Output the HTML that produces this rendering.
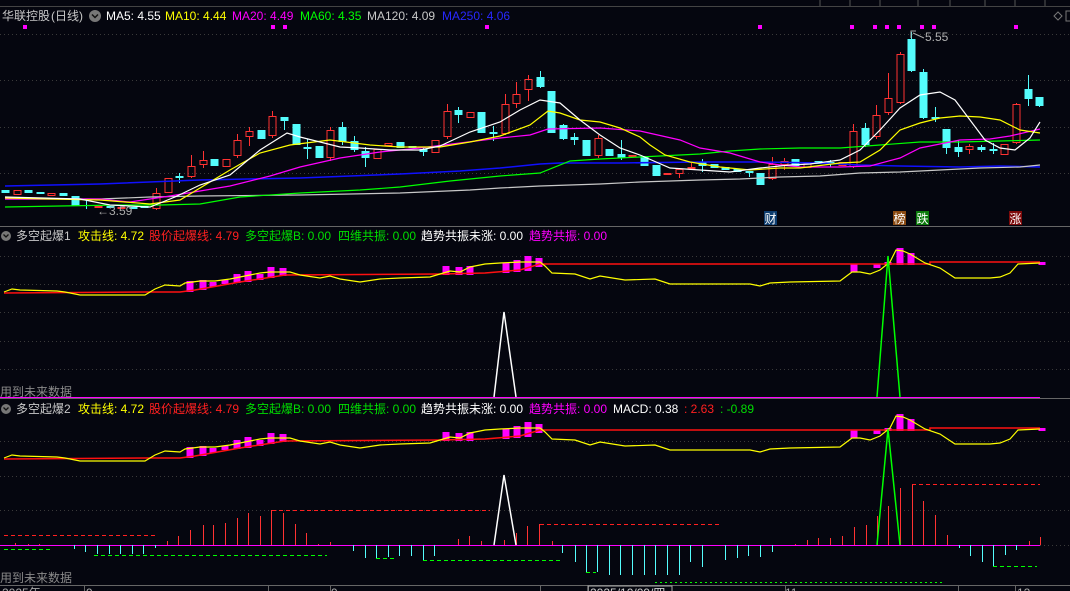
<!DOCTYPE html>
<html><head><meta charset="utf-8">
<style>
html,body{margin:0;padding:0;background:#05060f;}
body{width:1070px;height:591px;overflow:hidden;position:relative;font-family:"Liberation Sans","Noto Sans CJK SC",sans-serif;}
svg{position:absolute;left:0;top:0;}
.t{font-family:"Liberation Sans","Noto Sans CJK SC",sans-serif;font-size:12px;}
</style></head><body>
<svg id="s" width="1070" height="591" xmlns="http://www.w3.org/2000/svg"></svg>
<script>
var S=document.getElementById('s'),h='';
function L(pts,c,w,extra){h+='<polyline fill="none" stroke="'+c+'" stroke-width="'+(w||1)+'" '+(extra||'')+' points="'+pts.map(function(p){return p[0]+','+p[1]}).join(' ')+'"/>';}
function R(x,y,w,hh,f,st){h+='<rect x="'+x+'" y="'+y+'" width="'+w+'" height="'+hh+'" fill="'+f+'"'+(st?' stroke="'+st+'"':'')+'/>';}
function ln(x1,y1,x2,y2,c,da){h+='<line x1="'+x1+'" y1="'+y1+'" x2="'+x2+'" y2="'+y2+'" stroke="'+c+'"'+(da?' stroke-dasharray="'+da+'"':'')+'/>';}
function T(x,y,s,c,sz){h+='<text class="t" x="'+x+'" y="'+y+'" fill="'+c+'"'+(sz?' font-size="'+sz+'"':'')+'>'+s+'</text>';}
// top strip
ln(0,6.5,1070,6.5,'#444');
[820,850,880,918,950,985,1015,1045].forEach(function(x){ln(x,0,x,6,'#555')});
// grids
[34,80,127,173].forEach(function(y){ln(0,y+.5,1070,y+.5,'#3a3a3a','1,3')});
[256,284,312,341,369].forEach(function(y){ln(0,y+.5,1070,y+.5,'#3a3a3a','1,3')});
[441,476,510,545].forEach(function(y){ln(0,y+.5,1070,y+.5,'#3a3a3a','1,3')});
ln(0,226.5,1070,226.5,'#666');ln(0,398.5,1070,398.5,'#666');ln(0,585.5,1070,585.5,'#666');
// candles
var C=[[1,190,193],[0,190,195],[1,190,193],[1,192,194],[0,193,196],[1,193,196],[1,196,206],[1,205,206,199,209],[0,206,208],[1,206,208],[0,207,208],[1,207,209],[1,206,208],[0,193,209,188,210],[0,178,193],[1,176,178,173,183],[0,166,177,155,178],[0,160,165,151,168],[1,159,166],[0,159,167],[0,140,156,134,158],[0,131,137,127,146],[1,130,139],[0,116,136,111,138],[1,117,121,117,130],[1,124,145],[1,147,149,139,159],[1,146,158],[0,130,158,127,161],[1,127,142,122,145],[1,141,150,136,152],[1,151,158,147,167],[0,149,159],[0,143,146],[1,142,148],[1,146,148],[1,149,152,147,156],[0,140,153],[0,111,137,104,139],[1,110,115,107,123],[0,112,118],[1,112,133],[1,132,134,126,141],[0,104,134,94,135],[0,94,104,82,108],[0,79,90,75,101],[1,77,87,71,88],
[1,91,133],[1,125,139,124,140],[1,137,140,133,145],[1,140,156],[0,138,156,135,158],[1,149,156],[1,154,158,140,160],[0,155,157],[1,156,166],[1,165,176],[0,173,175],[0,169,174,168,178],[0,167,169,163,170],[1,162,166,159,172],[1,164,168],[1,167,170],[1,169,172],[1,171,173,171,177],[1,173,185],[0,164,179,157,180],[0,161,165,158,170],[1,159,166],[0,163,168],[1,161,164],[1,162,164,160,167],[0,162,166],[0,131,167,124,168],[1,128,145,123,147],[0,115,137,105,139],[0,98,113,73,115],[0,54,103,52,104],[1,39,71,32,72],[1,72,118,69,119],[1,117,119,107,122],[1,129,148,129,154],[1,147,152,140,157],[0,146,150,144,154],[1,147,150,145,152],[1,149,151,143,154],[0,144,155],[0,104,143,103,144],[1,89,99,75,106],[1,97,106,97,107]];
var dx=11.62,x0=5;
C.forEach(function(c,i){var x=Math.round(x0+dx*i);var hi=c[3]||c[1],lo=c[4]||c[2];
 if(c[0]){ln(x+.5,hi,x+.5,lo,'#54fcfc');R(x-3.5,c[1],8,Math.max(1,c[2]-c[1]),'#54fcfc');}
 else{ln(x+.5,hi,x+.5,c[1],'#ff3232');ln(x+.5,c[2],x+.5,lo,'#ff3232');R(x-3,c[1]+.5,7,Math.max(1,c[2]-c[1]-1),'none','#ff3232');}
});
// MAs
L([[5,186],[100,184],[200,180],[300,178],[400,174],[460,171],[500,168],[540,164],[560,163],[620,163],[700,162],[760,162],[820,163],[860,165],[900,166],[960,167],[1000,166],[1040,167]],'#1010ff',1.5);
L([[5,199],[100,199],[150,197],[200,196],[300,195],[400,193],[470,190],[500,188],[540,186],[600,184],[640,182],[700,180],[740,179],[780,177],[820,176],[860,173],[900,172],[940,170],[980,168],[1020,167],[1040,165]],'#c8c8c8',1.2);
L([[5,207],[60,206],[120,205],[160,205],[200,204],[240,197],[300,193],[360,190],[400,187],[450,181],[500,176],[540,173],[570,161],[600,159],[640,157],[680,155],[700,154],[730,151],[760,149],[800,148],[840,148],[880,145],[920,142],[960,142],[1000,141],[1040,140]],'#00ff00',1.2);
L([[5,199],[100,199],[130,202],[170,196],[230,186],[270,176],[300,167],[340,158],[380,152],[420,148],[460,143],[500,138],[530,135],[548,129],[600,128],[640,131],[680,140],[700,148],[730,153],[760,162],[780,165],[800,167],[840,167],[870,166],[900,158],[920,148],[940,144],[960,140],[990,139],[1010,136],[1040,129]],'#ff00ff',1.2);
L([[5,198],[100,200],[150,204],[180,200],[230,170],[260,153],[290,145],[330,140],[370,145],[400,147],[440,147],[470,142],[500,136],[530,125],[548,111],[560,113],[580,120],[600,122],[620,128],[640,137],[650,145],[665,155],[690,162],[720,167],[750,170],[780,168],[800,168],[840,163],[860,162],[880,150],[900,130],[920,123],[940,118],[960,116],[980,117],[1000,120],[1020,130],[1040,133]],'#ffff00',1.2);
L([[5,197],[80,199],[110,205],[150,207],[175,197],[200,185],[230,175],[260,150],[287,133],[300,137],[340,147],[360,148],[390,150],[420,150],[440,146],[470,132],[500,122],[520,110],[540,100],[560,103],[580,120],[600,135],[620,148],[640,155],[670,168],[700,170],[730,172],[760,168],[790,165],[810,164],[840,160],[860,150],[880,130],[900,108],[920,95],[940,92],[955,100],[970,120],[985,140],[1000,148],[1015,150],[1030,138],[1040,122]],'#ffffff',1.2);
// labels
T(97,215,'←3.59','#a8a8a8',12);
L([[911,38],[911,31],[916,31]],'#aaa',1);L([[913,33],[924,38]],'#aaa',1);T(925,41,'5.55','#b0b0b0',12);
[[764,'财','#0d3c6e'],[893,'榜','#8a4a12'],[916,'跌','#0b7a0b'],[1009,'涨','#7e0a0a']].forEach(function(b){R(b[0],211,13,14,b[2]);T(b[0]+0.5,223,b[1],'#fff',12);});
[25,273,285,487,760,852,875,887,899,922,934,1016].forEach(function(x){R(x-2,25,4,4,'#ff00ff')});
// indicator panels
function panel(o){
 var Y=[[4,292],[12,289],[20,290],[57,291],[65,292],[80,295],[145,295],[155,289],[165,285],[180,286],[185,283],[200,281],[215,281],[230,279],[245,276],[260,273],[270,272],[290,272],[300,275],[320,278],[330,276],[340,279],[360,282],[380,279],[400,278],[430,277],[440,274],[450,271],[460,272],[470,267],[485,264],[500,263],[520,262],[540,262],[545,266],[552,273],[575,274],[590,279],[600,276],[625,280],[655,279],[670,284],[750,284],[760,286],[770,283],[790,282],[840,281],[852,272],[860,272],[870,274],[880,270],[890,262],[896,250],[903,251],[910,254],[925,263],[940,268],[955,278],[990,278],[1000,277],[1010,273],[1018,264],[1040,263]];
 var B=[[190,281,292],[203,280,290],[213,282,287],[225,280,284],[237,274,283],[248,271,282],[260,274,280],[271,267,278],[283,268,276],[446,266,275],[459,267,275],[470,266,275],[506,263,273],[517,260,272],[528,256,271],[539,258,267],[854,264,272],[877,264,268],[888,262,265],[900,248,265],[911,253,265],[1042,262,265]];
 B.forEach(function(b){R(b[0]-3.5,b[1]+o,7,b[2]-b[1],'#ff00ff')});
 L([[4,293],[145,292],[180,292],[195,290],[240,282],[285,275],[440,274],[485,273],[520,270],[540,264],[930,264],[930,262],[1040,262]].map(function(p){return[p[0],p[1]+o]}),'#ff1010',1.5);
 L(Y.map(function(p){return[p[0],p[1]+o]}),'#ffff00',1.2);
}
panel(0);panel(166);
// panel1 spikes & zero
ln(0,397.5,1040,397.5,'#ff00ff');
L([[494,397],[504,312],[516,397]],'#ffffff',1.5);
L([[877,397],[888,256],[900,397]],'#00ff00',1.5);
// panel2 macd
ln(0,545.5,1040,545.5,'#ff00ff');
var M=[[15,543],[28,544],[39,544],[74,549],[85,552],[97,554],[109,554],[120,554],[132,554],[143,554],[155,548],[167,541],[178,536],[190,530],[203,525],[213,525],[225,523],[237,518],[248,513],[260,516],[271,510],[283,513],[295,524],[306,533],[318,544],[330,542],[353,551],[365,558],[376,558],[388,557],[399,556],[411,556],[423,561],[434,556],[458,539],[469,536],[481,541],[504,540],[516,533],[527,526],[539,524],[552,541],[562,553],[575,562],[586,573],[597,572],[609,575],[620,575],[632,575],[644,575],[655,575],[667,575],[679,575],[690,562],[702,567],[725,560],[737,558],[748,556],[760,557],[772,552],[795,544],[807,540],[818,538],[830,538],[842,536],[854,527],[866,525],[877,516],[888,506],[900,488],[912,484],[923,501],[935,515],[947,535],[959,548],[970,556],[982,562],[993,566],[1005,555],[1016,550],[1029,541],[1040,537]];
M.forEach(function(m){ln(m[0]+.5,545,m[0]+.5,m[1],m[1]<545?'#ff3232':'#54fcfc')});
ln(4,535.5,155,535.5,'#ff2020','4,3');ln(272,510.5,490,510.5,'#ff2020','4,3');ln(540,524.5,722,524.5,'#ff2020','4,3');ln(912,484.5,1040,484.5,'#ff2020','4,3');
ln(4,549.5,50,549.5,'#00ff00','4,3');ln(94,555.5,327,555.5,'#00ff00','4,3');ln(376,558.5,396,558.5,'#00ff00','4,3');ln(423,560.5,560,560.5,'#00ff00','4,3');ln(586,572.5,596,572.5,'#00ff00','4,3');ln(655,582.5,945,582.5,'#00ff00','2,3');ln(993,566.5,1037,566.5,'#00ff00','4,3');
L([[494,545],[504,475],[516,545]],'#ffffff',1.5);
L([[877,545],[888,429],[900,545]],'#00ff00',1.5);
// headers
T(2,20,'华联控股','#c8c8c8',12);T(51,20,'(日线)','#c8c8c8',12);
h+='<circle cx="95" cy="16" r="6" fill="#777"/><path d="M92 14.5 L95 17.5 L98 14.5" stroke="#111" stroke-width="1.5" fill="none"/>';
T(106,20,'MA5: 4.55','#ffffff');T(165,20,'MA10: 4.44','#ffff00');T(232,20,'MA20: 4.49','#ff00ff');T(300,20,'MA60: 4.35','#00ff00');T(367,20,'MA120: 4.09','#c8c8c8');T(442,20,'MA250: 4.06','#2828ff');
h+='<path d="M1054 16 L1058 12 L1062 16 L1058 20 Z" stroke="#777" fill="none"/><rect x="1066" y="11" width="6" height="10" stroke="#777" fill="none"/>';
function hdr(y,n,extra){
 h+='<circle cx="6" cy="'+(y-4)+'" r="5" fill="#777"/><path d="M3.5 '+(y-5.5)+' L6 '+(y-3)+' L8.5 '+(y-5.5)+'" stroke="#111" stroke-width="1.3" fill="none"/>';
 T(16,y,'多空起爆'+n,'#c8c8c8');T(78,y,'攻击线: 4.72','#ffff00');T(149,y,'股价起爆线: 4.79','#ff2020');T(245,y,'多空起爆B: 0.00','#00dd00');T(338,y,'四维共振: 0.00','#00dd00');T(421,y,'趋势共振未涨: 0.00','#ffffff');T(529,y,'趋势共振: 0.00','#ff00ff');
 if(extra){T(613,y,'MACD: 0.38','#ffffff');T(684,y,': 2.63','#ff2020');T(720,y,': -0.89','#00dd00');}
}
hdr(240,'1');hdr(413,'2',1);
T(0,396,'用到未来数据','#8a8a8a',12);T(0,582,'用到未来数据','#8a8a8a',12);
// bottom axis
[84,268,330,540,588,785,958,1015].forEach(function(x){ln(x+.5,586,x+.5,591,'#666')});
T(2,597,'2025年','#aaa',11);T(86,597,'9','#aaa',11);T(331,597,'9','#aaa',11);
R(588,586,84,8,'none','#aaa');T(590,597,'2025/10/09/四','#ccc',11);T(785,597,'11','#aaa',11);T(1017,597,'12','#aaa',11);
S.innerHTML=h;
</script>
</body></html>
